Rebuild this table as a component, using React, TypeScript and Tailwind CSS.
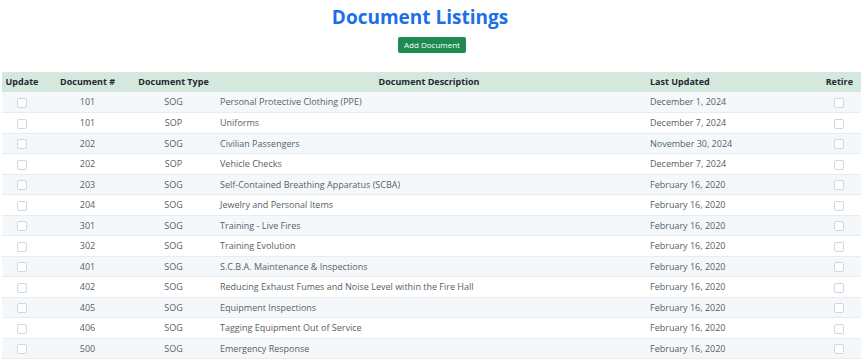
const documents = [
  { num: '101', type: 'SOG', description: 'Personal Protective Clothing (PPE)', updated: 'December 1, 2024' },
  { num: '101', type: 'SOP', description: 'Uniforms', updated: 'December 7, 2024' },
  { num: '202', type: 'SOG', description: 'Civilian Passengers', updated: 'November 30, 2024' },
  { num: '202', type: 'SOP', description: 'Vehicle Checks', updated: 'December 7, 2024' },
  { num: '203', type: 'SOG', description: 'Self-Contained Breathing Apparatus (SCBA)', updated: 'February 16, 2020' },
  { num: '204', type: 'SOG', description: 'Jewelry and Personal Items', updated: 'February 16, 2020' },
  { num: '301', type: 'SOG', description: 'Training - Live Fires', updated: 'February 16, 2020' },
  { num: '302', type: 'SOG', description: 'Training Evolution', updated: 'February 16, 2020' },
  { num: '401', type: 'SOG', description: 'S.C.B.A. Maintenance & Inspections', updated: 'February 16, 2020' },
  { num: '402', type: 'SOG', description: 'Reducing Exhaust Fumes and Noise Level within the Fire Hall', updated: 'February 16, 2020' },
  { num: '405', type: 'SOG', description: 'Equipment Inspections', updated: 'February 16, 2020' },
  { num: '406', type: 'SOG', description: 'Tagging Equipment Out of Service', updated: 'February 16, 2020' },
  { num: '500', type: 'SOG', description: 'Emergency Response', updated: 'February 16, 2020' },
];

function Checkbox() {
  return <span className="inline-block w-[10px] h-[10px] rounded-[2px] border border-[#d3d7dc] bg-white align-middle" />;
}

export default function App() {
  return (
    <div className="w-[864px] h-[362px] bg-white overflow-hidden font-['Open_Sans',sans-serif]">
      {/* Title */}
      <h1 className="text-center text-[19px] leading-[24px] pt-[5px] pr-[24px] font-bold text-[#1b6fe8]">
        Document Listings
      </h1>

      {/* Add button */}
      <div className="flex justify-center mt-[8px]">
        <button className="h-[16px] px-[6px] rounded-[2px] bg-[#1e8a50] text-white text-[8px] leading-[16px]">
          Add Document
        </button>
      </div>

      {/* Table */}
      <div className="px-[2px] mt-[19px]">
        <table className="w-[859px] table-fixed border-collapse text-[9px]">
          <colgroup>
            <col className="w-[40px]" />
            <col className="w-[91px]" />
            <col className="w-[81px]" />
            <col className="w-[430px]" />
            <col className="w-[172px]" />
            <col className="w-[45px]" />
          </colgroup>
          <thead>
            <tr className="h-[20px] bg-[#d4e8de] text-[#1f2a2e] font-bold">
              <th className="text-center">Update</th>
              <th className="text-center">Document #</th>
              <th className="text-center">Document Type</th>
              <th className="text-center">Document Description</th>
              <th className="text-left pl-[6px]">Last Updated</th>
              <th className="text-right pr-[8px]">Retire</th>
            </tr>
          </thead>
          <tbody className="text-[#595e63]">
            {documents.map((doc, i) => (
              <tr
                key={i}
                className={`h-[20.5px] border-b border-[#e9ecef] ${i % 2 === 0 ? 'bg-[#f5f8fb]' : 'bg-white'}`}
              >
                <td className="text-center"><Checkbox /></td>
                <td className="text-center">{doc.num}</td>
                <td className="text-center">{doc.type}</td>
                <td className="pl-[6px]">{doc.description}</td>
                <td className="pl-[6px]">{doc.updated}</td>
                <td className="text-center"><Checkbox /></td>
              </tr>
            ))}
          </tbody>
        </table>
      </div>
    </div>
  );
}
